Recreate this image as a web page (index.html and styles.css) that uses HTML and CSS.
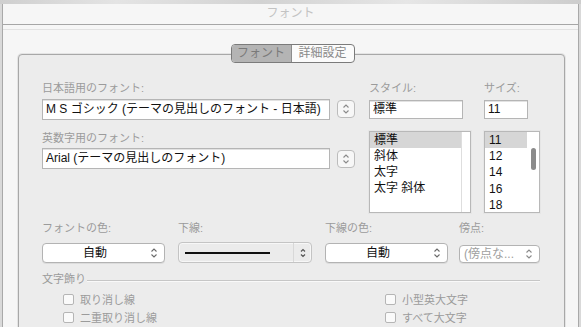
FILE: index.html
```html
<!DOCTYPE html>
<html lang="ja">
<head>
    <meta charset="UTF-8">
    <title>フォント</title>
    <link rel="stylesheet" href="styles.css">
</head>
<body>
    <div class="strip"></div>
    <div class="window">
        <div class="titlebar">フォント</div>
        <div class="toolbar-sep"></div>

        <div class="body">
            <div class="tabs">
                <span class="tab active">フォント</span>
                <span class="tab">詳細設定</span>
            </div>

            <div class="panel">
                <!-- フォント / スタイル / サイズ -->
                <div class="top">
                    <div class="col-font">
                        <div class="label">日本語用のフォント:</div>
                        <div class="field font-field">M S ゴシック (テーマの見出しのフォント - 日本語)</div>
                        <div class="label label-2">英数字用のフォント:</div>
                        <div class="field font-field field-2">Arial (テーマの見出しのフォント)</div>
                    </div>
                    <div class="col-step">
                        <div class="stepper">
                            <svg width="16" height="16" viewBox="0 0 16 16"><path d="M5.5 6.5 L8 4 L10.5 6.5 M5.5 9.5 L8 12 L10.5 9.5" fill="none" stroke="#8a8a8a" stroke-width="1.1"/></svg>
                        </div>
                        <div class="stepper stepper-2">
                            <svg width="16" height="16" viewBox="0 0 16 16"><path d="M5.5 6.5 L8 4 L10.5 6.5 M5.5 9.5 L8 12 L10.5 9.5" fill="none" stroke="#8a8a8a" stroke-width="1.1"/></svg>
                        </div>
                    </div>
                    <div class="col-style">
                        <div class="label">スタイル:</div>
                        <div class="field style-field">標準</div>
                        <div class="list style-list">
                            <div class="items">
                                <div class="item selected">標準</div>
                                <div class="item">斜体</div>
                                <div class="item">太字</div>
                                <div class="item">太字 斜体</div>
                            </div>
                            <div class="track"></div>
                        </div>
                    </div>
                    <div class="col-size">
                        <div class="label">サイズ:</div>
                        <div class="field size-field">11</div>
                        <div class="list size-list">
                            <div class="items">
                                <div class="item selected">11</div>
                                <div class="item">12</div>
                                <div class="item">14</div>
                                <div class="item">16</div>
                                <div class="item">18</div>
                            </div>
                            <div class="track"><div class="thumb"></div></div>
                        </div>
                    </div>
                </div>

                <!-- 色・下線・傍点 -->
                <div class="row3">
                    <div class="cell">
                        <div class="label">フォントの色:</div>
                        <div class="popup color-popup">自動
                            <svg class="chev" width="8" height="12" viewBox="0 0 8 12"><path d="M1.5 4.5 L4 2 L6.5 4.5 M1.5 7.5 L4 10 L6.5 7.5" fill="none" stroke="#6a6a6a" stroke-width="1.1"/></svg>
                        </div>
                    </div>
                    <div class="cell">
                        <div class="label">下線:</div>
                        <div class="underline-popup">
                            <div class="uline-area"><div class="uline"></div></div>
                            <div class="uline-step">
                                <svg width="8" height="12" viewBox="0 0 8 12"><path d="M2 4.5 L4 2.5 L6 4.5 M2 7.5 L4 9.5 L6 7.5" fill="none" stroke="#555" stroke-width="1.2"/></svg>
                            </div>
                        </div>
                    </div>
                    <div class="cell">
                        <div class="label">下線の色:</div>
                        <div class="popup ucolor-popup">自動
                            <svg class="chev" width="8" height="12" viewBox="0 0 8 12"><path d="M1.5 4.5 L4 2 L6.5 4.5 M1.5 7.5 L4 10 L6.5 7.5" fill="none" stroke="#6a6a6a" stroke-width="1.1"/></svg>
                        </div>
                    </div>
                    <div class="cell">
                        <div class="label">傍点:</div>
                        <div class="popup dot-popup">(傍点な...
                            <svg class="chev" width="8" height="12" viewBox="0 0 8 12"><path d="M1.5 4.5 L4 2 L6.5 4.5 M1.5 7.5 L4 10 L6.5 7.5" fill="none" stroke="#8a8a8a" stroke-width="1.1"/></svg>
                        </div>
                    </div>
                </div>

                <!-- 文字飾り -->
                <div class="group-head">
                    <span class="label">文字飾り</span>
                    <span class="group-line"></span>
                </div>
                <div class="checks">
                    <label class="check"><span class="box"></span>取り消し線</label>
                    <label class="check"><span class="box"></span>小型英大文字</label>
                    <label class="check"><span class="box"></span>二重取り消し線</label>
                    <label class="check"><span class="box"></span>すべて大文字</label>
                </div>
            </div>
        </div>
    </div>
</body>
</html>
```

FILE: styles.css
```css
* {
    margin: 0;
    padding: 0;
    box-sizing: border-box;
}

body {
    width: 581px;
    height: 327px;
    overflow: hidden;
    background-color: #d9d9d9;
    font-family: "Liberation Sans", "Noto Sans CJK JP", sans-serif;
    color: #111;
}

.strip {
    height: 4px;
    background: linear-gradient(90deg, #cfcfcf 0%, #e4e4e4 20%, #d2d2d2 45%, #e6e6e6 70%, #cdcdcd 100%);
}

.window {
    margin: 0 2px;
    height: 323px;
    overflow: hidden;
    background-color: #f6f6f6;
    border-left: 1px solid #a9a9a9;
    border-right: 1px solid #a9a9a9;
}

.titlebar {
    height: 21px;
    line-height: 19px;
    text-align: center;
    font-size: 12px;
    color: #c3c3c3;
    border-bottom: 1px solid #a6a6a6;
}

.toolbar-sep {
    margin-top: 4px;
    height: 1px;
    background-color: #e2e2e2;
}

.body {
    padding: 14px 13px 0 15px;
}

/* segmented control */
.tabs {
    position: relative;
    z-index: 1;
    display: flex;
    width: 124px;
    height: 19px;
    margin: 0 auto;
    transform: translateX(1px);
    border: 1px solid #7b7b7b;
    border-radius: 4px;
    overflow: hidden;
    background-color: #fbfbfb;
}

.tab {
    font-size: 12px;
    line-height: 17px;
    text-align: center;
    color: #8a8a8a;
    width: 62px;
}

.tab.active {
    width: 60px;
    background-color: #b4b4b4;
    color: #7a7a7a;
    border-right: 1px solid #8c8c8c;
}

.panel {
    margin-top: -9px;
    height: 280px;
    padding: 26px 0 0 23px;
    background-color: #ececec;
    border: 1px solid #a8a8a8;
    border-radius: 4px;
    box-shadow: 0 0 0 1px #e4e4e4;
}

.label {
    font-size: 11px;
    line-height: 14px;
    height: 14px;
    color: #9b9b9b;
    white-space: nowrap;
}

.field {
    background-color: #fff;
    border: 1px solid #b5b5b5;
    box-shadow: inset 0 1px 0 #e2e2e2;
    font-size: 12px;
    white-space: nowrap;
    overflow: hidden;
    padding-left: 3px;
}

/* top section */
.top {
    display: flex;
}

.col-font {
    width: 295px;
}

.font-field {
    width: 288px;
    height: 21px;
    line-height: 19px;
    margin-top: 4px;
}

.label-2 {
    margin-top: 11px;
}

.field-2 {
    margin-top: 3px;
}

.col-step {
    width: 32px;
}

.stepper {
    width: 18px;
    height: 18px;
    margin-top: 19px;
    border: 1px solid #bcbcbc;
    border-radius: 4px;
    background-color: #f7f7f7;
    display: flex;
    align-items: center;
    justify-content: center;
}

.stepper-2 {
    margin-top: 32px;
}

.col-style {
    width: 115px;
}

.style-field {
    width: 94px;
    height: 19px;
    line-height: 17px;
    margin-top: 5px;
}

.col-size {
    width: 56px;
}

.size-field {
    width: 44px;
    height: 19px;
    line-height: 17px;
    margin-top: 5px;
}

.list {
    margin-top: 12px;
    height: 82px;
    background-color: #fff;
    border: 1px solid #b8b8b8;
    box-shadow: 0 0 0 1px #e6e6e6;
    display: flex;
}

.style-list {
    width: 102px;
}

.size-list {
    width: 56px;
}

.items {
    flex: 1;
}

.item {
    font-size: 12px;
    line-height: 16px;
    height: 16px;
    padding-left: 4px;
    white-space: nowrap;
}

.size-list .item {
    height: 16.2px;
}

.item.selected {
    background-color: #d6d6d6;
}

.style-list .track {
    width: 9px;
    border-left: 1px solid #dedede;
}

.size-list .track {
    width: 12px;
    padding: 16px 3px 0 4px;
}

.thumb {
    width: 5px;
    height: 22px;
    border-radius: 3px;
    background-color: #8b8b8b;
}

/* row 3 */
.row3 {
    display: grid;
    grid-template-columns: 136px 147px 134px 81px;
    margin-top: 8px;
}

.popup {
    position: relative;
    margin-top: 8px;
    height: 20px;
    line-height: 18px;
    font-size: 12px;
    text-align: center;
    padding-right: 17px;
    background-color: #fff;
    border: 1px solid #b3b3b3;
    border-radius: 4px;
    box-shadow: 0 1px 0 #dcdcdc;
}

.chev {
    position: absolute;
    right: 6px;
    top: 3px;
}

.color-popup {
    width: 123px;
}

.ucolor-popup {
    width: 123px;
}

.dot-popup {
    width: 81px;
    height: 18px;
    line-height: 16px;
    margin-top: 10px;
    text-align: left;
    padding-left: 4px;
    color: #a0a0a0;
}

.dot-popup .chev {
    top: 2px;
}

.underline-popup {
    margin-top: 7px;
    width: 134px;
    height: 21px;
    display: flex;
    background-color: #ebebeb;
    border: 1px solid #c4c4c4;
    border-radius: 4px;
    box-shadow: inset 0 0 0 1px #f7f7f7;
}

.uline-area {
    flex: 1;
    display: flex;
    align-items: center;
    padding-left: 6px;
}

.uline {
    width: 85px;
    height: 2px;
    background-color: #111;
}

.uline-step {
    width: 18px;
    border-left: 1px solid #d8d8d8;
    display: flex;
    align-items: center;
    justify-content: center;
}

/* 文字飾り */
.group-head {
    display: flex;
    align-items: center;
    margin-top: 9px;
    width: 498px;
}

.group-line {
    flex: 1;
    margin-left: 1px;
    margin-top: 4px;
    height: 2px;
    border-top: 1px solid #c6c6c6;
    border-bottom: 1px solid #f9f9f9;
}

.checks {
    display: grid;
    grid-template-columns: 322px 160px;
    padding-left: 21px;
    margin-top: 4px;
}

.check {
    display: flex;
    align-items: center;
    height: 18px;
    font-size: 11px;
    color: #9b9b9b;
}

.box {
    width: 11px;
    height: 11px;
    margin-right: 6px;
    border: 1px solid #b5b5b5;
    border-radius: 2px;
    background-color: #fafafa;
}
```
